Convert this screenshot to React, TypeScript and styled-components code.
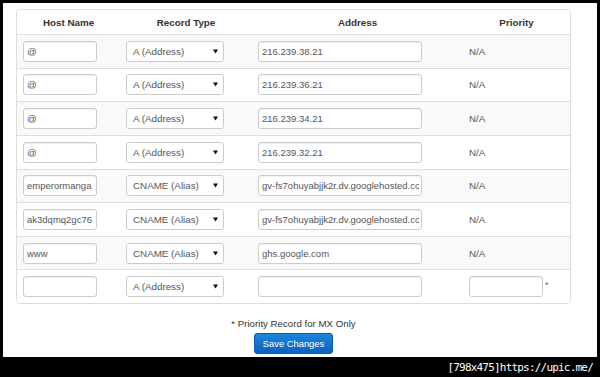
import React from "react";
import styled, { createGlobalStyle } from "styled-components";

const Global = createGlobalStyle`
  html, body { margin: 0; padding: 0; background: #000; }
  body {
    width: 600px;
    height: 377px;
    overflow: hidden;
    font-family: "Liberation Sans", Arial, sans-serif;
  }
  * { box-sizing: border-box; }
`;

const Page = styled.div`
  width: 600px;
  height: 377px;
  background: #000;
  display: flex;
  flex-direction: column;
  padding: 3px 3px 0 3px;
`;

const Screen = styled.div`
  background: #fff;
  height: 354px;
  padding: 6px 0 0 13px;
  display: flex;
  flex-direction: column;
`;

const Panel = styled.div`
  width: 555px;
  border: 1px solid #ddd;
  border-radius: 4px;
  overflow: hidden;
`;

const Row = styled.div<{ $striped?: boolean; $header?: boolean }>`
  display: grid;
  grid-template-columns: 103px 132px 211px 107px;
  align-items: center;
  height: ${(p) => (p.$header ? "24px" : "33.625px")};
  border-top: ${(p) => (p.$header ? "none" : "1px solid #ddd")};
  background: ${(p) => (p.$striped ? "#f9f9f9" : "#fff")};
`;

const HeadCell = styled.div`
  text-align: center;
  font-weight: bold;
  font-size: 9.8px;
  color: #333;
  line-height: 12px;
  padding-top: 2px;
`;

const Cell = styled.div`
  padding-left: 6px;
  display: flex;
  align-items: center;
`;

const TextInput = styled.input<{ $w: number }>`
  width: ${(p) => p.$w}px;
  height: 21px;
  border: 1px solid #ccc;
  border-radius: 3px;
  background: #fff;
  box-shadow: inset 0 1px 1px rgba(0, 0, 0, 0.06);
  padding: 0 2px 0 3px;
  margin: 0;
  font-family: "Liberation Sans", Arial, sans-serif;
  font-size: 9.5px;
  color: #555;
  outline: none;
`;

const SelectBox = styled.div`
  width: 98px;
  height: 21px;
  border: 1px solid #ccc;
  border-radius: 3px;
  background: #fff;
  display: flex;
  align-items: center;
  justify-content: space-between;
  padding: 0 5px 0 6px;
  font-size: 9.8px;
  color: #555;
`;

const NA = styled.span`
  font-size: 9.8px;
  color: #555;
`;

const Star = styled.span`
  font-size: 9px;
  color: #666;
  margin-left: 2px;
  align-self: flex-start;
  margin-top: 4px;
`;

const Footer = styled.div`
  width: 555px;
  display: flex;
  flex-direction: column;
  align-items: center;
`;

const Note = styled.div`
  margin-top: 14px;
  font-size: 9.7px;
  line-height: 12px;
  color: #333;
`;

const SaveButton = styled.button`
  margin-top: 3px;
  height: 21px;
  width: 79px;
  padding: 0;
  border: 1px solid #0b5cae;
  border-radius: 3px;
  background: linear-gradient(#1b86dc, #0a63bf);
  color: #fff;
  font-family: "Liberation Sans", Arial, sans-serif;
  font-size: 9.4px;
  cursor: pointer;
`;

const BottomBar = styled.div`
  height: 20px;
  display: flex;
  align-items: center;
  justify-content: flex-end;
  padding-right: 4px;
  color: #fff;
  font-family: "DejaVu Sans Mono", monospace;
  font-size: 11px;
  letter-spacing: -0.8px;
`;

const Arrow = () => (
  <svg width="5" height="5" viewBox="0 0 5 5">
    <polygon points="0,0.5 5,0.5 2.5,4.5" fill="#111" />
  </svg>
);

type Rec = { host: string; type: string; addr: string };

const GOOGLE = "gv-fs7ohuyabjjk2r.dv.googlehosted.com";

const records: Rec[] = [
  { host: "@", type: "A (Address)", addr: "216.239.38.21" },
  { host: "@", type: "A (Address)", addr: "216.239.36.21" },
  { host: "@", type: "A (Address)", addr: "216.239.34.21" },
  { host: "@", type: "A (Address)", addr: "216.239.32.21" },
  { host: "emperormanga", type: "CNAME (Alias)", addr: GOOGLE },
  { host: "ak3dqmq2gc76", type: "CNAME (Alias)", addr: GOOGLE },
  { host: "www", type: "CNAME (Alias)", addr: "ghs.google.com" },
];

export default function App() {
  return (
    <>
      <Global />
      <Page>
        <Screen>
          <Panel>
            <Row $header>
              <HeadCell>Host Name</HeadCell>
              <HeadCell>Record Type</HeadCell>
              <HeadCell>Address</HeadCell>
              <HeadCell>Priority</HeadCell>
            </Row>
            {records.map((r, i) => (
              <Row key={i} $striped={i % 2 === 0}>
                <Cell>
                  <TextInput $w={74} defaultValue={r.host} />
                </Cell>
                <Cell>
                  <SelectBox>
                    <span>{r.type}</span>
                    <Arrow />
                  </SelectBox>
                </Cell>
                <Cell>
                  <TextInput $w={164} defaultValue={r.addr} />
                </Cell>
                <Cell>
                  <NA>N/A</NA>
                </Cell>
              </Row>
            ))}
            <Row>
              <Cell>
                <TextInput $w={74} defaultValue="" />
              </Cell>
              <Cell>
                <SelectBox>
                  <span>A (Address)</span>
                  <Arrow />
                </SelectBox>
              </Cell>
              <Cell>
                <TextInput $w={164} defaultValue="" />
              </Cell>
              <Cell>
                <TextInput $w={74} defaultValue="" />
                <Star>*</Star>
              </Cell>
            </Row>
          </Panel>
          <Footer>
            <Note>* Priority Record for MX Only</Note>
            <SaveButton>Save Changes</SaveButton>
          </Footer>
        </Screen>
        <BottomBar>[798x475]https://upic.me/</BottomBar>
      </Page>
    </>
  );
}
